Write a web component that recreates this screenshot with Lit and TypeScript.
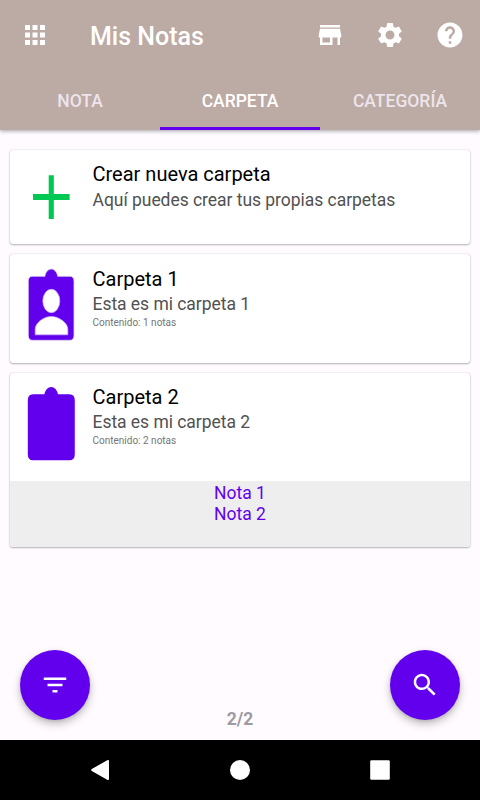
import { LitElement, html, css, nothing } from "lit";
import { customElement, property, state } from "lit/decorators.js";
import { classMap } from "lit/directives/class-map.js";

const icons = {
  apps: "M4 8h4V4H4v4zm6 12h4v-4h-4v4zm-6 0h4v-4H4v4zm0-6h4v-4H4v4zm6 0h4v-4h-4v4zm6-10v4h4V4h-4zm-6 4h4V4h-4v4zm6 6h4v-4h-4v4zm0 6h4v-4h-4v4z",
  store: "M20 4H4v2h16V4zm1 10v-2l-1-5H4l-1 5v2h1v6h10v-6h4v6h2v-6h1zm-9 4H6v-4h6v4z",
  settings:
    "M19.14 12.94c.04-.3.06-.61.06-.94 0-.32-.02-.64-.07-.94l2.03-1.58c.18-.14.23-.41.12-.61l-1.92-3.32c-.12-.22-.37-.29-.59-.22l-2.39.96c-.5-.38-1.03-.7-1.62-.94l-.36-2.54c-.04-.24-.24-.41-.48-.41h-3.84c-.24 0-.43.17-.47.41l-.36 2.54c-.59.24-1.13.57-1.62.94l-2.39-.96c-.22-.08-.47 0-.59.22L2.74 8.87c-.12.21-.08.47.12.61l2.03 1.58c-.05.3-.09.63-.09.94s.02.64.07.94l-2.03 1.58c-.18.14-.23.41-.12.61l1.92 3.32c.12.22.37.29.59.22l2.39-.96c.5.38 1.03.7 1.62.94l.36 2.54c.05.24.24.41.48.41h3.84c.24 0 .44-.17.47-.41l.36-2.54c.59-.24 1.13-.56 1.62-.94l2.39.96c.22.08.47 0 .59-.22l1.92-3.32c.12-.22.07-.47-.12-.61l-2.01-1.58zM12 15.6c-1.98 0-3.6-1.62-3.6-3.6s1.62-3.6 3.6-3.6 3.6 1.62 3.6 3.6-1.62 3.6-3.6 3.6z",
  help: "M12 2C6.48 2 2 6.48 2 12s4.48 10 10 10 10-4.48 10-10S17.52 2 12 2zm1 17h-2v-2h2v2zm2.07-7.75l-.9.92C13.45 12.9 13 13.5 13 15h-2v-.5c0-1.1.45-2.1 1.17-2.83l1.24-1.26c.37-.36.59-.86.59-1.41 0-1.1-.9-2-2-2s-2 .9-2 2H8c0-2.21 1.79-4 4-4s4 1.79 4 4c0 .88-.36 1.68-.93 2.25z",
  filter: "M10 18h4v-2h-4v2zM3 6v2h18V6H3zm3 7h12v-2H6v2z",
  search:
    "M15.5 14h-.79l-.28-.27C15.41 12.59 16 11.11 16 9.5 16 5.91 13.09 3 9.5 3S3 5.91 3 9.5 5.91 16 9.5 16c1.61 0 3.09-.59 4.23-1.57l.27.28v.79l5 4.99L20.49 19l-4.99-5zm-6 0C7.01 14 5 11.99 5 9.5S7.01 5 9.5 5 14 7.01 14 9.5 11.99 14 9.5 14z",
};

const icon = (name: keyof typeof icons) => html`
  <svg width="30" height="30" viewBox="0 0 24 24" fill="currentColor"><path d=${icons[name]}></path></svg>
`;

type Kind = "plus" | "person" | "board";

@customElement("folder-icon")
class FolderIcon extends LitElement {
  @property() kind: Kind = "board";

  static styles = css`
    :host { display: block; flex: none; width: 60px; height: 90px; }
    svg { display: block; }
  `;

  render() {
    if (this.kind === "plus") {
      return html`<svg width="60" height="90" viewBox="0 0 60 90">
        <path fill="#00c853" d="M28.700 20.200h5.100v18.800h15.800v6.100H33.800v19h-5.100V45.100H13v-6.100h15.700z"></path>
      </svg>`;
    }
    if (this.kind === "person") {
      return html`<svg width="60" height="90" viewBox="0 0 60 90">
        <path fill="#6200ee" stroke="#ddd8ea" stroke-width="0.800"
          d="M12.500 12.300h12.400c.7-4.300 3.300-7.300 6.400-7.300s5.700 3 6.400 7.300h12.100q4.200 0 4.200 5v54q0 5-4.200 5H12.500q-4.200 0-4.200-5v-54q0-5 4.200-5z"></path>
        <ellipse cx="31.300" cy="37" rx="8.500" ry="11.700" fill="#fff" stroke="#cbb6f2" stroke-width="0.700"></ellipse>
        <path fill="#fff" stroke="#cbb6f2" stroke-width="0.700" d="M15.200 70.800v-5.600c0-6.200 8.400-12.700 16.100-12.700s16.500 6.500 16.500 12.700v5.600z"></path>
      </svg>`;
    }
    return html`<svg width="60" height="90" viewBox="0 0 60 90">
      <path fill="#6200ee"
        d="M13 11.200h11.400c.8-4.200 3.500-7.300 6.800-7.300s6 3.100 6.800 7.300h11.400q5.400 0 5.400 6v54q0 6-5.400 6H13q-5.200 0-5.200-6v-54q0-6 5.200-6z"></path>
    </svg>`;
  }
}

@customElement("folder-card")
class FolderCard extends LitElement {
  @property() name = "";
  @property() detail = "";
  @property() content = "";
  @property() kind: Kind = "board";
  @property({ attribute: false }) notes: string[] = [];

  static styles = css`
    :host {
      display: block;
      background: #fff;
      border-radius: 3px;
      overflow: hidden;
      box-shadow: 0 1px 2px rgba(0, 20, 20, 0.28), 0 0 1.5px rgba(0, 0, 0, 0.22);
    }
    .row { display: flex; height: 108.5px; padding: 10px; box-sizing: border-box; }
    .row.create { height: 94px; padding-top: 5px; }
    .text { display: flex; flex-direction: column; padding: 0.7px 0 0 12.5px; white-space: nowrap; }
    .row.create .text { padding-top: 5px; }
    .name { font-size: 20px; line-height: 28px; color: #000; }
    .detail { font-size: 17.5px; line-height: 23px; letter-spacing: -0.04px; color: #515151; }
    .row.create .detail { margin-top: 1px; }
    .content { font-size: 10px; line-height: 12px; margin-top: 1px; color: #757575; }
    .notes {
      height: 65.5px;
      padding-top: 2px;
      box-sizing: border-box;
      background: #eee;
      color: #6200ee;
      font-size: 17.5px;
      line-height: 21px;
      text-align: center;
    }
  `;

  render() {
    return html`
      <div class=${classMap({ row: true, create: this.kind === "plus" })}>
        <folder-icon .kind=${this.kind}></folder-icon>
        <div class="text">
          <div class="name">${this.name}</div>
          <div class="detail">${this.detail}</div>
          ${this.content ? html`<div class="content">${this.content}</div>` : nothing}
        </div>
      </div>
      ${this.notes.length ? html`<div class="notes">${this.notes.map((n) => html`<div>${n}</div>`)}</div>` : nothing}
    `;
  }
}

@customElement("app-root")
class AppRoot extends LitElement {
  @state() private active = 1;

  private tabs = ["NOTA", "CARPETA", "CATEGORÍA"];
  private folders: { kind: Kind; name: string; detail: string; content?: string; notes?: string[] }[] = [
    { kind: "plus", name: "Crear nueva carpeta", detail: "Aquí puedes crear tus propias carpetas" },
    { kind: "person", name: "Carpeta 1", detail: "Esta es mi carpeta 1", content: "Contenido: 1 notas" },
    {
      kind: "board",
      name: "Carpeta 2",
      detail: "Esta es mi carpeta 2",
      content: "Contenido: 2 notas",
      notes: ["Nota 1", "Nota 2"],
    },
  ];

  static styles = css`
    :host {
      display: flex;
      flex-direction: column;
      width: 480px;
      height: 800px;
      overflow: hidden;
      background: #fffbfe;
      font-family: Roboto, "Liberation Sans", sans-serif;
    }
    svg { display: block; }
    header {
      height: 130px;
      flex: none;
      background: #bcaaa4;
      color: #fff;
      box-shadow: 0 1px 4px rgba(0, 10, 30, 0.38);
    }
    .bar { display: flex; align-items: center; height: 70px; padding: 0 15px 0 20px; gap: 30px; }
    h1 { flex: 1; margin: 4px 0 0 10px; font-size: 25px; line-height: 30px; font-weight: 500; }
    .tabs { display: grid; grid-template-columns: repeat(3, 1fr); height: 60px; }
    .tab {
      display: flex;
      align-items: center;
      justify-content: center;
      box-sizing: border-box;
      padding-top: 5px;
      border-bottom: 3px solid transparent;
      font-size: 17.5px;
      font-weight: 500;
      color: #ede4ec;
    }
    .tab.active { color: #fff; border-color: #6200ee; }
    main { flex: 1; display: flex; flex-direction: column; gap: 10px; padding: 20px 10px 0; }
    .bottom { display: flex; justify-content: space-between; height: 90px; flex: none; padding: 0 20px; }
    .fab {
      display: flex;
      align-items: center;
      justify-content: center;
      width: 70px;
      height: 70px;
      border-radius: 50%;
      background: #6200ee;
      color: #fff;
      box-shadow: 0 4px 8px rgba(0, 0, 0, 0.26), 0 1px 3px rgba(0, 0, 0, 0.1);
    }
    .count { align-self: flex-end; padding-bottom: 10px; font-size: 17.5px; line-height: 21px; font-weight: 700; color: #9e99a2; }
    nav { display: flex; flex: none; align-items: center; justify-content: center; gap: 110px; height: 60px; background: #000; }
  `;

  render() {
    return html`
      <header>
        <div class="bar">
          ${icon("apps")}
          <h1>Mis Notas</h1>
          ${icon("store")}${icon("settings")}${icon("help")}
        </div>
        <div class="tabs">
          ${this.tabs.map(
            (t, i) => html`<div class=${classMap({ tab: true, active: i === this.active })} @click=${() => (this.active = i)}>${t}</div>`
          )}
        </div>
      </header>
      <main>
        ${this.folders.map(
          (f) => html`<folder-card
            .kind=${f.kind}
            .name=${f.name}
            .detail=${f.detail}
            .content=${f.content ?? ""}
            .notes=${f.notes ?? []}
          ></folder-card>`
        )}
      </main>
      <div class="bottom">
        <div class="fab">${icon("filter")}</div>
        <div class="count">2/2</div>
        <div class="fab">${icon("search")}</div>
      </div>
      <nav>
        <svg width="30" height="30" viewBox="0 0 30 30" fill="#fff"><path d="M6.800 14.100 22.200 5.200q1.800-.9 1.800.7v18.200q0 1.600-1.800.7L6.800 15.900q-1.300-.9 0-1.800z"></path></svg>
        <svg width="30" height="30" viewBox="0 0 30 30" fill="#fff"><circle cx="15" cy="15" r="10"></circle></svg>
        <svg width="30" height="30" viewBox="0 0 30 30" fill="#fff"><rect x="5.200" y="5.200" width="19.600" height="19.600" rx="1.300"></rect></svg>
      </nav>
    `;
  }
}
